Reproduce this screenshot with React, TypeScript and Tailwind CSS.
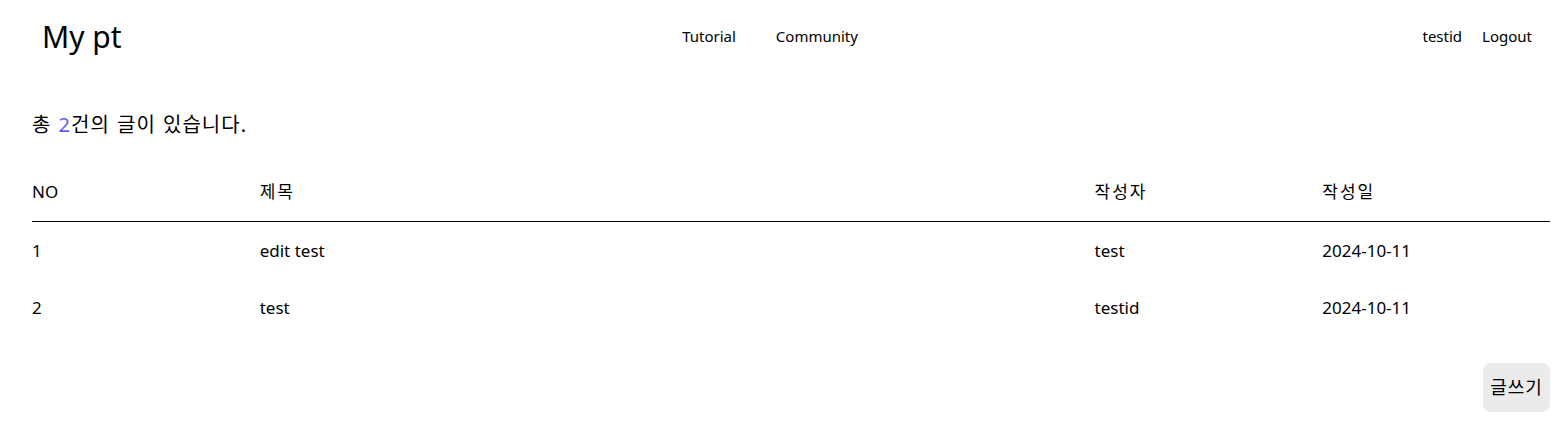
const posts = [
  { no: 1, title: "edit test", writer: "test", date: "2024-10-11" },
  { no: 2, title: "test", writer: "testid", date: "2024-10-11" },
];

export default function App() {
  return (
    <div className="min-h-screen bg-white text-black font-['Noto_Sans','Noto_Sans_CJK_KR',sans-serif]">
      <header className="flex h-[76px] items-center justify-between pl-[42px] pr-[35px]">
        <a className="text-[30px] leading-none pb-[2px]">My pt</a>
        <nav className="flex gap-[40px] text-[15px] pb-[4px] pr-[4px]">
          <a>Tutorial</a>
          <a>Community</a>
        </nav>
        <div className="flex gap-[20px] text-[15px] pb-[4px]">
          <span>testid</span>
          <a>Logout</a>
        </div>
      </header>

      <main className="px-[32px] pr-[17px]">
        <p className="mt-[35px] text-[20px] leading-[28px] tracking-[1px] [word-spacing:1px]">
          총 <span className="text-[#5d5df0]">2</span>건의 글이 있습니다.
        </p>

        <table className="mt-[24px] w-full table-fixed text-[17px]">
          <colgroup>
            <col className="w-[15%]" />
            <col className="w-[55%]" />
            <col className="w-[15%]" />
            <col className="w-[15%]" />
          </colgroup>
          <thead>
            <tr className="h-[58px] border-b border-black text-left">
              <th className="font-normal pb-[1px]">NO</th>
              <th className="font-normal tracking-[2px] pb-[1px]">제목</th>
              <th className="font-normal tracking-[2px] pb-[1px]">작성자</th>
              <th className="font-normal tracking-[2px] pb-[1px]">작성일</th>
            </tr>
          </thead>
          <tbody>
            {posts.map((p) => (
              <tr key={p.no} className="h-[58px]">
                <td>{p.no}</td>
                <td>{p.title}</td>
                <td>{p.writer}</td>
                <td>{p.date}</td>
              </tr>
            ))}
          </tbody>
        </table>

        <div className="mt-[26px] flex justify-end">
          <button
            type="button"
            className="h-[49px] w-[67px] rounded-[8px] bg-[#ebebeb] text-[18px] tracking-[1px]"
          >
            글쓰기
          </button>
        </div>
      </main>
    </div>
  );
}
